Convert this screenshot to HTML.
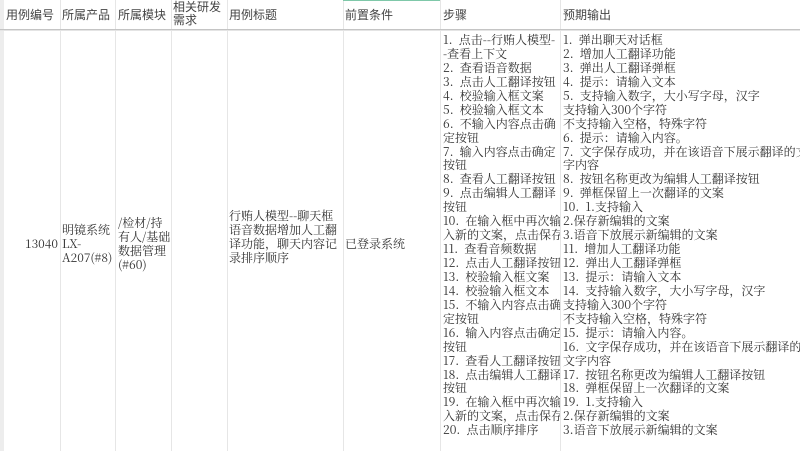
<!DOCTYPE html>
<html><head><meta charset="utf-8"><style>
*{margin:0;padding:0}
body{width:800px;height:451px;overflow:hidden;background:#fff;position:relative;font-family:"Noto Serif CJK SC","Liberation Serif",serif;font-size:12px;color:#333}
.v{position:absolute;top:0;height:451px;width:1px;background:#e6e6e6}
.t{position:absolute;white-space:pre;line-height:13.93px;overflow:hidden}
.h{position:absolute;top:8px;line-height:14px;white-space:pre;font-family:"Liberation Sans","Noto Sans CJK SC",sans-serif;font-size:12px;color:#444}
</style></head><body>
<div style="position:absolute;left:0;top:0;width:4px;height:451px;background:#ededed"></div>
<div class="v" style="left:60px"></div><div class="v" style="left:115px"></div><div class="v" style="left:171px"></div><div class="v" style="left:227px"></div><div class="v" style="left:343px"></div><div class="v" style="left:440px"></div><div class="v" style="left:560px"></div>
<div style="position:absolute;left:343px;top:0;width:97px;height:1px;background:#7fc8a9"></div>
<div style="position:absolute;left:0;top:29px;width:800px;height:1px;background:#c4c4c4"></div>
<div style="position:absolute;left:0;top:30px;width:800px;height:1px;background:#e4e4e4"></div>
<div class="h" style="left:6px">用例编号</div>
<div class="h" style="left:62px">所属产品</div>
<div class="h" style="left:118px">所属模块</div>
<div class="h" style="left:173px;top:1px;line-height:13px">相关研发
需求</div>
<div class="h" style="left:229px">用例标题</div>
<div class="h" style="left:345px">前置条件</div>
<div class="h" style="left:443px">步骤</div>
<div class="h" style="left:563px">预期输出</div>
<div class="t" style="left:10px;width:48px;text-align:right;top:237px">13040</div>
<div class="t" style="left:62px;top:223px">明镜系统
LX-
A207(#8)</div>
<div class="t" style="left:118px;top:216px">/检材/持
有人/基础
数据管理
(#60)</div>
<div class="t" style="left:229px;top:209px">行贿人模型--聊天框
语音数据增加人工翻
译功能，聊天内容记
录排序顺序</div>
<div class="t" style="left:345px;top:237px">已登录系统</div>
<div class="t" style="left:443px;top:33px;width:117px">1.  点击--行贿人模型-
-查看上下文
2.  查看语音数据
3.  点击人工翻译按钮
4.  校验输入框文案
5.  校验输入框文本
6.  不输入内容点击确
定按钮
7.  输入内容点击确定
按钮
8.  查看人工翻译按钮
9.  点击编辑人工翻译
按钮
10.  在输入框中再次输
入新的文案，点击保存
11.  查看音频数据
12.  点击人工翻译按钮
13.  校验输入框文案
14.  校验输入框文本
15.  不输入内容点击确
定按钮
16.  输入内容点击确定
按钮
17.  查看人工翻译按钮
18.  点击编辑人工翻译
按钮
19.  在输入框中再次输
入新的文案，点击保存
20.  点击顺序排序</div>
<div class="t" style="left:563px;top:33px;width:237px">1.  弹出聊天对话框
2.  增加人工翻译功能
3.  弹出人工翻译弹框
4.  提示：请输入文本
5.  支持输入数字，大小写字母，汉字
支持输入300个字符
不支持输入空格，特殊字符
6.  提示：请输入内容。
7.  文字保存成功，并在该语音下展示翻译的文
字内容
8.  按钮名称更改为编辑人工翻译按钮
9.  弹框保留上一次翻译的文案
10.  1.支持输入
2.保存新编辑的文案
3.语音下放展示新编辑的文案
11.  增加人工翻译功能
12.  弹出人工翻译弹框
13.  提示：请输入文本
14.  支持输入数字，大小写字母，汉字
支持输入300个字符
不支持输入空格，特殊字符
15.  提示：请输入内容。
16.  文字保存成功，并在该语音下展示翻译的
文字内容
17.  按钮名称更改为编辑人工翻译按钮
18.  弹框保留上一次翻译的文案
19.  1.支持输入
2.保存新编辑的文案
3.语音下放展示新编辑的文案</div>
</body></html>
